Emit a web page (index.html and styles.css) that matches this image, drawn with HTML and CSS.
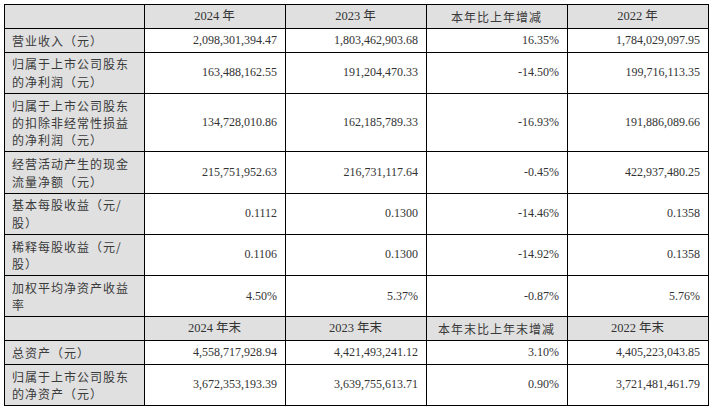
FILE: index.html
```html
<!DOCTYPE html>
<html lang="zh-CN">
<head>
<meta charset="utf-8">
<title>主要会计数据</title>
<link rel="stylesheet" href="styles.css">
</head>
<body>
<div class="wrap">
<table class="fin">
  <colgroup>
    <col class="c1"><col class="c2"><col class="c3"><col class="c4"><col class="c5">
  </colgroup>
  <tr class="head">
    <td class="label"></td><td>2024 年</td><td>2023 年</td><td class="cjk">本年比上年增减</td><td>2022 年</td>
  </tr>
  <tr>
    <td class="label">营业收入（元）</td><td class="num">2,098,301,394.47</td><td class="num">1,803,462,903.68</td><td class="num">16.35%</td><td class="num">1,784,029,097.95</td>
  </tr>
  <tr>
    <td class="label">归属于上市公司股东<br>的净利润（元）</td><td class="num">163,488,162.55</td><td class="num">191,204,470.33</td><td class="num">-14.50%</td><td class="num">199,716,113.35</td>
  </tr>
  <tr>
    <td class="label">归属于上市公司股东<br>的扣除非经常性损益<br>的净利润（元）</td><td class="num">134,728,010.86</td><td class="num">162,185,789.33</td><td class="num">-16.93%</td><td class="num">191,886,089.66</td>
  </tr>
  <tr>
    <td class="label">经营活动产生的现金<br>流量净额（元）</td><td class="num">215,751,952.63</td><td class="num">216,731,117.64</td><td class="num">-0.45%</td><td class="num">422,937,480.25</td>
  </tr>
  <tr>
    <td class="label">基本每股收益（元/<br>股）</td><td class="num">0.1112</td><td class="num">0.1300</td><td class="num">-14.46%</td><td class="num">0.1358</td>
  </tr>
  <tr>
    <td class="label">稀释每股收益（元/<br>股）</td><td class="num">0.1106</td><td class="num">0.1300</td><td class="num">-14.92%</td><td class="num">0.1358</td>
  </tr>
  <tr>
    <td class="label">加权平均净资产收益<br>率</td><td class="num">4.50%</td><td class="num">5.37%</td><td class="num">-0.87%</td><td class="num">5.76%</td>
  </tr>
  <tr class="head">
    <td class="label"></td><td>2024 年末</td><td>2023 年末</td><td class="cjk">本年末比上年末增减</td><td>2022 年末</td>
  </tr>
  <tr>
    <td class="label">总资产（元）</td><td class="num">4,558,717,928.94</td><td class="num">4,421,493,241.12</td><td class="num">3.10%</td><td class="num">4,405,223,043.85</td>
  </tr>
  <tr>
    <td class="label">归属于上市公司股东<br>的净资产（元）</td><td class="num">3,672,353,193.39</td><td class="num">3,639,755,613.71</td><td class="num">0.90%</td><td class="num">3,721,481,461.79</td>
  </tr>
</table>
</div>
</body>
</html>
```
FILE: styles.css
```css
html, body {
  margin: 0;
  padding: 0;
  background: #ffffff;
}
.wrap {
  padding: 4px 0 0 4px;
}
.fin {
  border-collapse: collapse;
  table-layout: fixed;
  width: 704px;
  font-family: "Liberation Serif", "Noto Sans CJK SC", serif;
  font-size: 12px;
  color: #333333;
}
.c1 { width: 140px; }
.c2 { width: 141px; }
.c3 { width: 141px; }
.c4 { width: 141px; }
.c5 { width: 141px; }
.fin td {
  border: 1px solid #000000;
  padding: 2.8px 8px 2.6px 7px;
  line-height: 17.4px;
  vertical-align: middle;
  white-space: nowrap;
}
.fin .label {
  background: #e0e0e0;
  text-align: left;
  font-family: "Noto Sans CJK SC", sans-serif;
  font-size: 12px;
  letter-spacing: 1px;
  color: #3a3a3a;
}
.fin .head td {
  background: #e0e0e0;
  text-align: center;
  font-size: 12.5px;
}
.fin .head td.cjk {
  font-family: "Noto Sans CJK SC", sans-serif;
  font-size: 12px;
  letter-spacing: 1px;
  color: #3a3a3a;
}
.fin .num {
  text-align: right;
}
```
